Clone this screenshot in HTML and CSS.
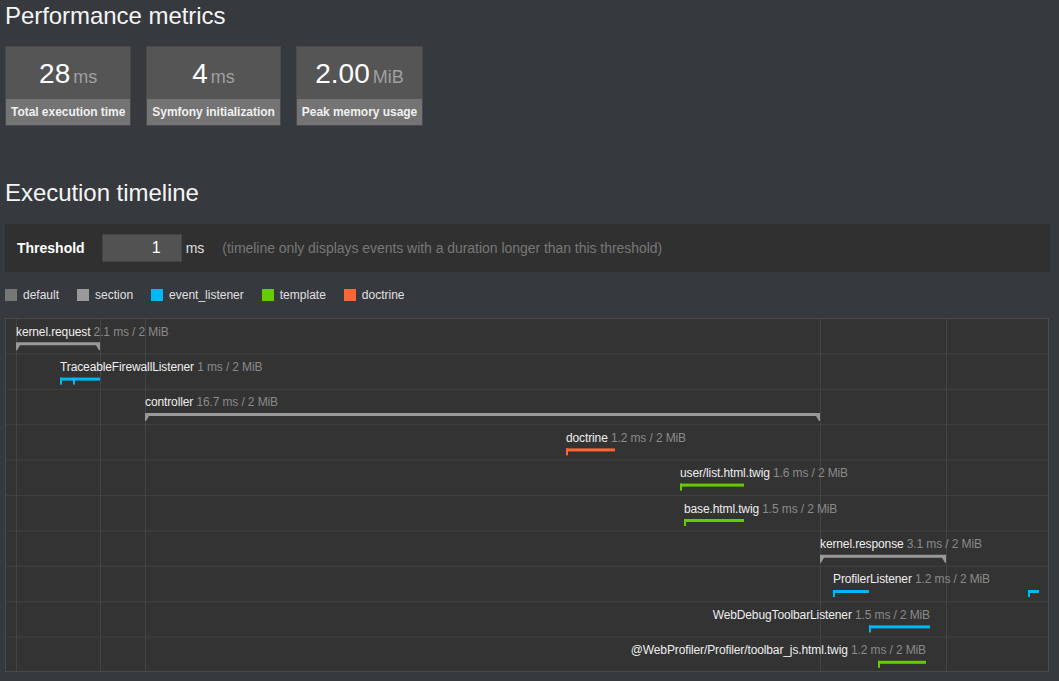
FILE: index.html
```html
<!DOCTYPE html>
<html lang="en">
<head>
<meta charset="utf-8">
<title>Performance metrics</title>
<link rel="stylesheet" href="styles.css">
</head>
<body>
<h2 class="title">Performance metrics</h2>
<div class="metrics">
  <div class="metric">
    <span class="value">28<span class="unit">ms</span></span>
    <span class="label">Total execution time</span>
  </div>
  <div class="metric">
    <span class="value">4<span class="unit">ms</span></span>
    <span class="label">Symfony initialization</span>
  </div>
  <div class="metric">
    <span class="value">2.00<span class="unit">MiB</span></span>
    <span class="label">Peak memory usage</span>
  </div>
</div>

<h2 class="title title-timeline">Execution timeline</h2>
<div class="threshold">
  <label class="threshold-label" for="threshold">Threshold</label>
  <input class="threshold-input" id="threshold" type="text" value="1">
  <span class="threshold-unit">ms</span>
  <span class="threshold-help">(timeline only displays events with a duration longer than this threshold)</span>
</div>

<div class="legend">
  <span class="legend-item"><span class="swatch sw-default"></span>default</span>
  <span class="legend-item"><span class="swatch sw-section"></span>section</span>
  <span class="legend-item"><span class="swatch sw-listener"></span>event_listener</span>
  <span class="legend-item"><span class="swatch sw-template"></span>template</span>
  <span class="legend-item"><span class="swatch sw-doctrine"></span>doctrine</span>
</div>

<div class="timeline">
<svg class="timeline-svg" width="1042" height="352" viewBox="0 0 1042 352" xmlns="http://www.w3.org/2000/svg">
  <g transform="translate(-6,-319)">
    <!-- row separators -->
    <g class="grid-row">
      <line x1="5" x2="1049" y1="353.9" y2="353.9"/>
      <line x1="5" x2="1049" y1="389.3" y2="389.3"/>
      <line x1="5" x2="1049" y1="424.7" y2="424.7"/>
      <line x1="5" x2="1049" y1="460.1" y2="460.1"/>
      <line x1="5" x2="1049" y1="495.5" y2="495.5"/>
      <line x1="5" x2="1049" y1="530.9" y2="530.9"/>
      <line x1="5" x2="1049" y1="566.3" y2="566.3"/>
      <line x1="5" x2="1049" y1="601.7" y2="601.7"/>
      <line x1="5" x2="1049" y1="637.1" y2="637.1"/>
    </g>
    <!-- section lines -->
    <g class="grid-col">
      <line x1="16.5" x2="16.5" y1="319" y2="672"/>
      <line x1="100.5" x2="100.5" y1="319" y2="672"/>
      <line x1="145.5" x2="145.5" y1="319" y2="672"/>
      <line x1="820.5" x2="820.5" y1="319" y2="672"/>
      <line x1="946.5" x2="946.5" y1="319" y2="672"/>
    </g>

    <!-- row 0: kernel.request -->
    <text class="ev-text" x="16" y="335.5"><tspan class="ev-name">kernel.request</tspan> <tspan class="ev-dur">2.1 ms / 2 MiB</tspan></text>
    <polygon class="c-section" points="16,342.3 100,342.3 100,350.3 99,350.3 96,345.3 20,345.3 17,350.3 16,350.3"/>

    <!-- row 1: TraceableFirewallListener -->
    <text class="ev-text" x="60" y="370.9"><tspan class="ev-name">TraceableFirewallListener</tspan> <tspan class="ev-dur">1 ms / 2 MiB</tspan></text>
    <rect class="c-listener" x="60" y="377.6" width="40" height="3"/>
    <rect class="c-listener" x="60" y="377.6" width="2" height="7"/>
    <rect class="c-listener" x="73" y="377.6" width="2" height="7"/>

    <!-- row 2: controller -->
    <text class="ev-text" x="145" y="406.3"><tspan class="ev-name">controller</tspan> <tspan class="ev-dur">16.7 ms / 2 MiB</tspan></text>
    <polygon class="c-section" points="145,413 820,413 820,421 819,421 816,416 149,416 146,421 145,421"/>

    <!-- row 3: doctrine -->
    <text class="ev-text" x="566" y="441.7"><tspan class="ev-name">doctrine</tspan> <tspan class="ev-dur">1.2 ms / 2 MiB</tspan></text>
    <rect class="c-doctrine" x="566" y="448.4" width="49" height="3"/>
    <rect class="c-doctrine" x="566" y="448.4" width="2" height="7"/>

    <!-- row 4: user/list.html.twig -->
    <text class="ev-text" x="680" y="477.1"><tspan class="ev-name">user/list.html.twig</tspan> <tspan class="ev-dur">1.6 ms / 2 MiB</tspan></text>
    <rect class="c-template" x="680" y="483.6" width="64" height="3"/>
    <rect class="c-template" x="680" y="483.6" width="2" height="7"/>

    <!-- row 5: base.html.twig -->
    <text class="ev-text" x="684" y="512.5"><tspan class="ev-name">base.html.twig</tspan> <tspan class="ev-dur">1.5 ms / 2 MiB</tspan></text>
    <rect class="c-template" x="684" y="519" width="60" height="3"/>
    <rect class="c-template" x="684" y="519" width="2" height="7"/>

    <!-- row 6: kernel.response -->
    <text class="ev-text" x="820" y="547.9"><tspan class="ev-name">kernel.response</tspan> <tspan class="ev-dur">3.1 ms / 2 MiB</tspan></text>
    <polygon class="c-section" points="820,554.8 946,554.8 946,562.8 945,562.8 942,557.8 824,557.8 821,562.8 820,562.8"/>

    <!-- row 7: ProfilerListener -->
    <text class="ev-text" x="833" y="583.3"><tspan class="ev-name">ProfilerListener</tspan> <tspan class="ev-dur">1.2 ms / 2 MiB</tspan></text>
    <rect class="c-listener" x="833" y="590" width="36" height="3"/>
    <rect class="c-listener" x="833" y="590" width="2" height="7"/>
    <rect class="c-listener" x="1028" y="590" width="11" height="3"/>
    <rect class="c-listener" x="1028" y="590" width="2" height="7"/>

    <!-- row 8: WebDebugToolbarListener -->
    <text class="ev-text" x="930" y="618.7" text-anchor="end"><tspan class="ev-name">WebDebugToolbarListener</tspan> <tspan class="ev-dur">1.5 ms / 2 MiB</tspan></text>
    <rect class="c-listener" x="869" y="625.4" width="61" height="3"/>
    <rect class="c-listener" x="869" y="625.4" width="2" height="7"/>

    <!-- row 9: toolbar_js -->
    <text class="ev-text" x="926" y="654.1" text-anchor="end"><tspan class="ev-name">@WebProfiler/Profiler/toolbar_js.html.twig</tspan> <tspan class="ev-dur">1.2 ms / 2 MiB</tspan></text>
    <rect class="c-template" x="878" y="660.8" width="48" height="3"/>
    <rect class="c-template" x="878" y="660.8" width="2" height="7"/>
  </g>
</svg>
</div>
</body>
</html>
```

FILE: styles.css
```css
html, body {
  margin: 0;
  padding: 0;
}

body {
  background: #36393e;
  color: #f0f0f0;
  font-family: "Liberation Sans", Arial, sans-serif;
  padding: 2px 9px 0 5px;
  height: 679px;
  overflow: hidden;
}

.title {
  margin: 0;
  font-size: 24px;
  line-height: 28px;
  font-weight: normal;
  color: #f5f5f5;
  letter-spacing: -0.05px;
}

.title-timeline {
  margin-top: 53px;
}

/* metrics */
.metrics {
  display: flex;
  gap: 15px;
  margin-top: 16px;
}

.metric {
  display: flex;
  flex-direction: column;
  border: 1px solid #4a4a4a;
}

.metric .value {
  display: block;
  background: #555;
  color: #fff;
  text-align: center;
  font-size: 28px;
  line-height: 32px;
  height: 32px;
  padding: 11px 5px 9px;
}

.metric .unit {
  font-size: 18px;
  line-height: 18px;
  color: #a0a0a0;
  margin-left: 3px;
}

.metric .label {
  display: block;
  background: #747474;
  color: #f0f0f0;
  font-size: 12px;
  font-weight: bold;
  line-height: 14px;
  padding: 6px 5px;
  text-align: center;
  white-space: nowrap;
  letter-spacing: -0.04px;
}

/* threshold */
.threshold {
  display: flex;
  align-items: center;
  background: #303030;
  margin-top: 17px;
  height: 48px;
  padding: 0 11px 0 12px;
  font-size: 14px;
}

.threshold-label {
  font-weight: bold;
  color: #fff;
  margin-right: 17px;
}

.threshold-input {
  box-sizing: border-box;
  width: 80px;
  height: 28px;
  background: #525252;
  border: 1px solid #444;
  color: #fff;
  font-family: "Liberation Sans", Arial, sans-serif;
  font-size: 16px;
  text-align: right;
  padding: 0 20px 0 4px;
  margin: 0;
  outline: none;
}

.threshold-unit {
  color: #e0e0e0;
  margin-left: 4px;
}

.threshold-help {
  color: #777;
  margin-left: 18px;
  letter-spacing: -0.04px;
}

/* legend */
.legend {
  display: flex;
  align-items: center;
  gap: 18px;
  margin-top: 16px;
  height: 14px;
  font-size: 12px;
  color: #e0e0e0;
}

.legend-item {
  display: flex;
  align-items: center;
}

.swatch {
  display: inline-block;
  width: 12px;
  height: 12px;
  margin-right: 6px;
}

.sw-default { background: #777; }
.sw-section { background: #999; }
.sw-listener { background: #00b8f5; }
.sw-template { background: #66cc00; }
.sw-doctrine { background: #ff6633; }

/* timeline */
.timeline {
  margin-top: 16px;
  width: 1042px;
  border: 1px solid #4a4a4a;
  background: #333;
}

.timeline-svg {
  display: block;
}

.grid-row line {
  stroke: #404040;
  stroke-width: 1;
}

.grid-col line {
  stroke: #444;
  stroke-width: 1;
}

.ev-text {
  font-family: "Liberation Sans", Arial, sans-serif;
  font-size: 12px;
  letter-spacing: -0.12px;
}

.ev-name { fill: #eee; }
.ev-dur { fill: #8a8a8a; }

.c-section { fill: #999; }
.c-listener { fill: #00b8f5; }
.c-template { fill: #66cc00; }
.c-doctrine { fill: #ff6633; }
```
